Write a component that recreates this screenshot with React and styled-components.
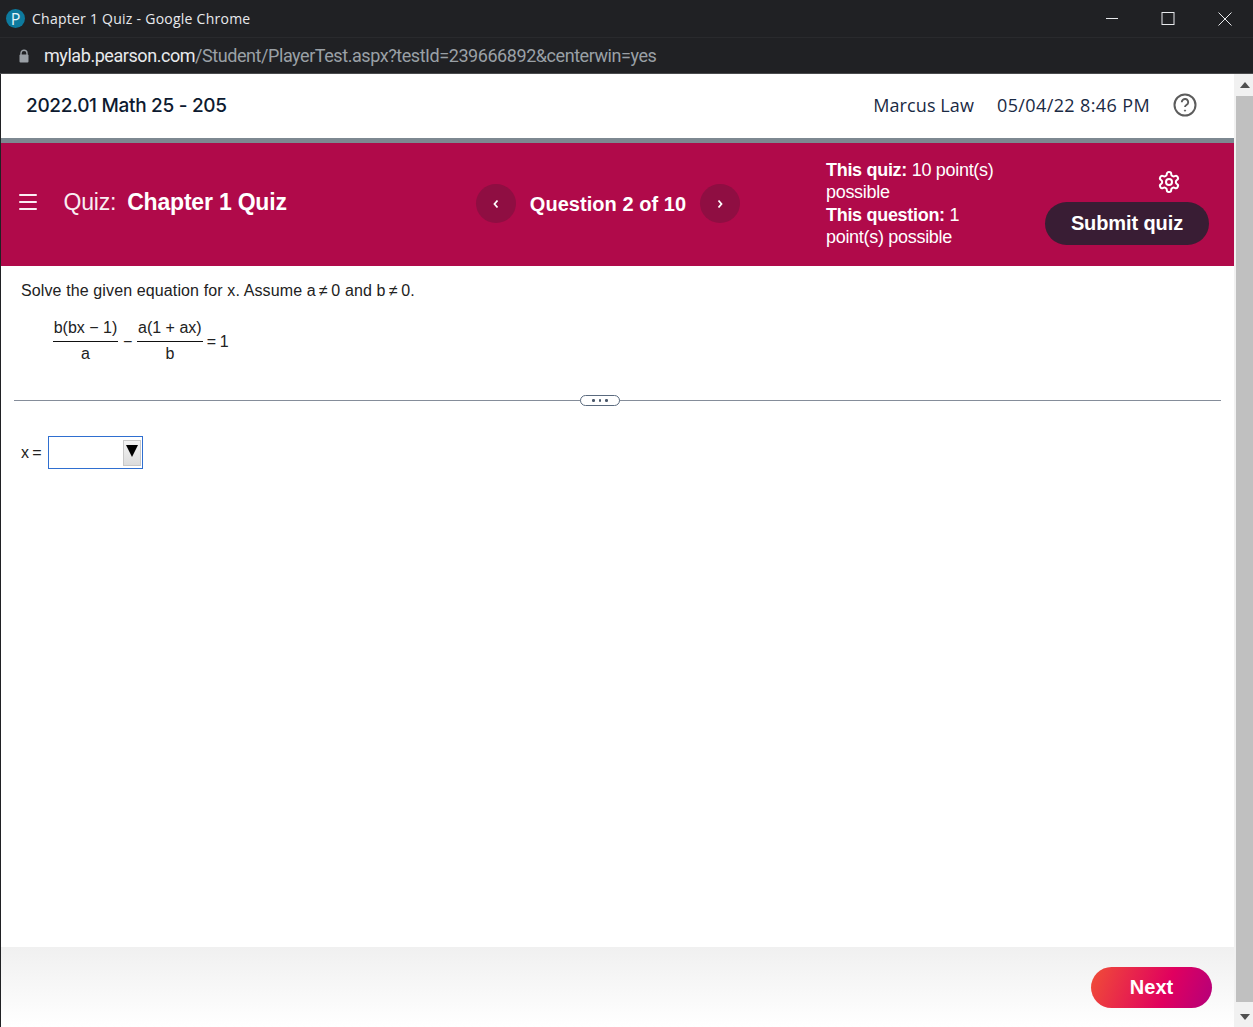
import React from "react";
import styled, { createGlobalStyle } from "styled-components";

const Global = createGlobalStyle`
  html, body { margin: 0; padding: 0; background: #fff; }
  * { box-sizing: border-box; }
  body { font-family: "Liberation Sans", Arial, sans-serif; overflow: hidden; }
`;
const Win = styled.div`
  width: 1253px; height: 1027px; display: flex; flex-direction: column; overflow: hidden;
`;
const TitleBar = styled.div`
  height: 38px; background: #202124; border-bottom: 1px solid #292a2d; display: flex; align-items: center;
  padding-left: 6px; color: #e8eaed; flex: none;
`;
const Favicon = styled.div`
  width: 19px; height: 19px; border-radius: 50%; background: #0d7a9e; color: #e6f4f8; display: flex;
  align-items: center; justify-content: center; font: 400 16px "Open Sans", sans-serif; margin-right: 7px;
`;
const WinTitle = styled.div`
  font: 14px/20px "Open Sans", sans-serif; letter-spacing: 0.25px; flex: 1;
`;
const WinButtons = styled.div`
  display: flex; align-items: center; height: 100%;
`;
const WinBtn = styled.div`
  width: 57px; height: 100%; display: flex; align-items: center; justify-content: center;
`;
const AddressBar = styled.div`
  height: 36px; background: #202124; display: flex; align-items: center; padding: 1px 0 0 18px; flex: none;
  border-bottom: 1px solid #4a4b4d;
`;
const Url = styled.div`
  font: 18px/24px "Roboto", sans-serif; letter-spacing: -0.44px; color: #9aa0a6; margin-left: 14px;
  & b { font-weight: 400; color: #e8eaed; }
`;
const Main = styled.div`
  flex: 1; display: flex; min-height: 0;
`;
const Page = styled.div`
  flex: 1; display: flex; flex-direction: column; border-left: 1px solid #202124; min-width: 0;
`;
const TopHeader = styled.header`
  height: 64px; display: flex; align-items: center; padding: 0 37px 1px 25px; color: #12213a; flex: none;
`;
const Course = styled.div`
  font: 500 19px/26px "Inter", sans-serif; letter-spacing: -0.3px; color: #0d1a30; flex: 1;
`;
const Meta = styled.div`
  font: 18px/26px "Open Sans", sans-serif; letter-spacing: ${p => p.$ls}px; color: #1a2a44; margin: -2px 23px 0 0;
`;
const Help = styled.div`
  width: 24px; height: 24px; display: flex; margin-top: -2px;
`;
const GreyRule = styled.div`
  height: 5px; background: #7d8891; flex: none;
`;
const QuizBar = styled.div`
  height: 123px; background: #b00a4a; color: #fff; display: flex; align-items: center; flex: none;
  font-family: "Liberation Sans", sans-serif;
`;
const Menu = styled.div`
  width: 18px; margin: -5px 0 0 17.5px; display: flex; flex-direction: column; gap: 5px;
  & i { display: block; height: 2px; background: #fbeef3; border-radius: 1px; }
`;
const QuizTitle = styled.div`
  width: 412.5px; margin: -6px 0 0 27px; font-size: 23px; line-height: 28px; white-space: nowrap;
  letter-spacing: -0.2px;
  & span { font-weight: 300; margin-right: 11px; opacity: .93; }
  & b { font-weight: 700; }
`;
const QNav = styled.div`
  display: flex; align-items: center; width: 350px; margin-top: -2px;
`;
const NavBtn = styled.div`
  width: 40px; height: 39px; border-radius: 50%; background: #8f0e42; display: flex; align-items: center; justify-content: center;
`;
const QLabel = styled.div`
  font-size: 20px; font-weight: 700; line-height: 26px; width: 184px; text-align: center; letter-spacing: 0.05px;
`;
const Points = styled.div`
  width: 219px; font-size: 18px; line-height: 22.5px; letter-spacing: -0.3px; margin-top: -2px;
  & b { font-weight: 700; }
`;
const Actions = styled.div`
  display: flex; flex-direction: column; align-items: flex-end; width: 164px; gap: 8px; margin-top: 6px;
`;
const Gear = styled.div`
  width: 24px; height: 24px; margin-right: 28px;
`;
const Submit = styled.div`
  width: 164px; height: 43px; border-radius: 22px; background: #391d34; font-size: 20px; font-weight: 700;
  display: flex; align-items: center; justify-content: center; letter-spacing: -0.1px;
`;
const Content = styled.main`
  flex: 1; color: #1c1c1c; font-size: 16px; padding: 15px 13px 0 20px; display: flex; flex-direction: column; min-height: 0;
`;
const Prompt = styled.div`
  line-height: 19px; letter-spacing: 0.12px; color: #222;
`;
const Equation = styled.div`
  display: flex; align-items: center; margin: 18px 0 0 32px; font-size: 16px; color: #222;
`;
const Fraction = styled.div`
  display: flex; flex-direction: column; align-items: center; width: ${p => p.$w}px;
`;
const Num = styled.div`
  line-height: 20px; padding-bottom: 3px; width: 100%; text-align: center; border-bottom: 1px solid #111;
`;
const Den = styled.div`
  line-height: 20px; padding-top: 2px;
`;
const Op = styled.div`
  margin: 2px ${p => p.$m}px 0; line-height: 20px; letter-spacing: -0.5px;
`;
const Divider = styled.div`
  margin: 36px 0 0 -7px; height: 1px; background: #858d9a; position: relative; flex: none;
`;
const Handle = styled.div`
  position: absolute; left: 566px; top: -5px; width: 40px; height: 11px; background: #fff; border: 1px solid #5a6a7e; border-radius: 6px;
  display: flex; align-items: center; justify-content: center; gap: 4px;
  & i { width: 2.5px; height: 2.5px; border-radius: 50%; background: #4a586a; display: block; }
`;
const AnswerRow = styled.div`
  display: flex; align-items: center; margin-top: 35px; font-size: 16px; color: #222;
`;
const Answer = styled.div`
  width: 95px; height: 33px; margin-left: 6px; border: 1px solid #2f6fd0; display: flex; justify-content: flex-end; align-items: flex-start;
  padding: 3px 1px 0 0;
`;
const Arrow = styled.div`
  width: 18px; height: 26px; background: linear-gradient(#f4f4f4, #dcdcdc); border: 1px solid #c8c8c8; display: flex; align-items: flex-start; justify-content: center; padding-top: 4px;
`;
const Footer = styled.footer`
  height: 80px; flex: none; background: linear-gradient(#f0f0f0, #fff); display: flex; justify-content: flex-end; align-items: center;
  padding: 0 22px 0 0;
`;
const Next = styled.div`
  width: 121px; height: 41px; border-radius: 21px; margin-top: 1px; color: #fff; font-size: 20px; font-weight: 700;
  background: linear-gradient(110deg, #f04e37 0%, #e0005f 62%, #b4007a 100%);
  display: flex; align-items: center; justify-content: center;
`;
const ScrollBar = styled.div`
  width: 19px; background: #f1f1f1; display: flex; flex-direction: column; flex: none; padding-left: 2px;
`;
const ScrollEnd = styled.div`
  height: ${p => p.$h}px; padding-top: ${p => p.$pad}px; display: flex; align-items: center; justify-content: center; flex: none;
`;
const Thumb = styled.div`
  flex: 1; background: #c0c0c0;
`;

const Chevron = ({ left }) => (
  <svg width="10" height="12" viewBox="0 0 10 12" fill="none" stroke="#fff" strokeWidth="1.8">
    <path d={left ? "M6.5 2.5L3.5 6l3 3.5" : "M3.5 2.5L6.5 6l-3 3.5"} />
  </svg>
);
const Tri = ({ up }) => (
  <svg width="10" height="6" viewBox="0 0 10 6" fill="#505050"><path d={up ? "M5 0l5 6H0z" : "M0 0h10L5 6z"} /></svg>
);

export default function App() {
  return (
    <Win>
      <Global />
      <TitleBar>
        <Favicon>P</Favicon>
        <WinTitle>Chapter 1 Quiz - Google Chrome</WinTitle>
        <WinButtons>
          <WinBtn><svg width="14" height="14" viewBox="0 0 14 14" stroke="#e8eaed" fill="none"><path d="M2 6.5h12" /></svg></WinBtn>
          <WinBtn><svg width="14" height="14" viewBox="0 0 14 14" stroke="#e8eaed" fill="none"><rect x="1" y=".5" width="12" height="12" /></svg></WinBtn>
          <WinBtn><svg width="14" height="14" viewBox="0 0 14 14" stroke="#e8eaed" fill="none"><path d="M.5.5l13 13M13.5.5l-13 13" /></svg></WinBtn>
        </WinButtons>
      </TitleBar>
      <AddressBar>
        <svg width="12" height="14" viewBox="0 0 12 14"><path d="M3 6V4.2a3 3 0 016 0V6" fill="none" stroke="#9aa0a6" strokeWidth="1.4" /><rect x="1.5" y="5.5" width="9" height="8" rx="1" fill="#9aa0a6" /></svg>
        <Url><b>mylab.pearson.com</b>/Student/PlayerTest.aspx?testId=239666892&amp;centerwin=yes</Url>
      </AddressBar>
      <Main>
        <Page>
          <TopHeader>
            <Course>2022.01 Math 25 - 205</Course>
            <Meta $ls={0.1}>Marcus Law</Meta>
            <Meta $ls={0.38}>05/04/22 8:46 PM</Meta>
            <Help>
              <svg width="24" height="24" viewBox="0 0 24 24" fill="none" stroke="#5c5c5c" strokeWidth="2">
                <circle cx="12" cy="12" r="10.5" />
                <path d="M8.8 9.3a3.2 3.2 0 116 1.4c-.6 1-2.8 1.6-2.8 3.3" strokeWidth="1.9" />
                <circle cx="12" cy="17.6" r=".6" fill="#5c5c5c" strokeWidth="1" />
              </svg>
            </Help>
          </TopHeader>
          <GreyRule />
          <QuizBar>
            <Menu><i /><i /><i /></Menu>
            <QuizTitle><span>Quiz:</span><b>Chapter 1 Quiz</b></QuizTitle>
            <QNav>
              <NavBtn><Chevron left /></NavBtn>
              <QLabel>Question 2 of 10</QLabel>
              <NavBtn><Chevron /></NavBtn>
            </QNav>
            <Points>
              <b>This quiz:</b> 10 point(s)<br />possible<br />
              <b>This question:</b> 1<br />point(s) possible
            </Points>
            <Actions>
              <Gear>
                <svg width="24" height="24" viewBox="0 0 24 24" fill="none" stroke="#fff" strokeWidth="2" strokeLinecap="round" strokeLinejoin="round">
                  <path d="M12.22 2h-.44a2 2 0 0 0-2 2v.18a2 2 0 0 1-1 1.73l-.43.25a2 2 0 0 1-2 0l-.15-.08a2 2 0 0 0-2.73.73l-.22.38a2 2 0 0 0 .73 2.73l.15.1a2 2 0 0 1 1 1.72v.51a2 2 0 0 1-1 1.74l-.15.09a2 2 0 0 0-.73 2.73l.22.38a2 2 0 0 0 2.73.73l.15-.08a2 2 0 0 1 2 0l.43.25a2 2 0 0 1 1 1.73V20a2 2 0 0 0 2 2h.44a2 2 0 0 0 2-2v-.18a2 2 0 0 1 1-1.73l.43-.25a2 2 0 0 1 2 0l.15.08a2 2 0 0 0 2.73-.73l.22-.39a2 2 0 0 0-.73-2.73l-.15-.08a2 2 0 0 1-1-1.74v-.5a2 2 0 0 1 1-1.74l.15-.09a2 2 0 0 0 .73-2.73l-.22-.38a2 2 0 0 0-2.73-.73l-.15.08a2 2 0 0 1-2 0l-.43-.25a2 2 0 0 1-1-1.73V4a2 2 0 0 0-2-2z" />
                  <circle cx="12" cy="12" r="3" />
                </svg>
              </Gear>
              <Submit>Submit quiz</Submit>
            </Actions>
          </QuizBar>
          <Content>
            <Prompt>Solve the given equation for x. Assume a{"\u2009≠\u2009"}0 and b{"\u2009≠\u2009"}0.</Prompt>
            <Equation>
              <Fraction $w={65}><Num>b(bx − 1)</Num><Den>a</Den></Fraction>
              <Op $m={5}>−</Op>
              <Fraction $w={66}><Num>a(1 + ax)</Num><Den>b</Den></Fraction>
              <Op $m={4}>= 1</Op>
            </Equation>
            <Divider><Handle><i /><i /><i /></Handle></Divider>
            <AnswerRow>
              x{"\u2009"}=
              <Answer><Arrow><svg width="12" height="12" viewBox="0 0 12 12" fill="#000"><path d="M0 0h12L6 12z" /></svg></Arrow></Answer>
            </AnswerRow>
          </Content>
          <Footer><Next>Next</Next></Footer>
        </Page>
        <ScrollBar>
          <ScrollEnd $h={22} $pad={0}><Tri up /></ScrollEnd>
          <Thumb />
          <ScrollEnd $h={25} $pad={4}><Tri /></ScrollEnd>
        </ScrollBar>
      </Main>
    </Win>
  );
}
